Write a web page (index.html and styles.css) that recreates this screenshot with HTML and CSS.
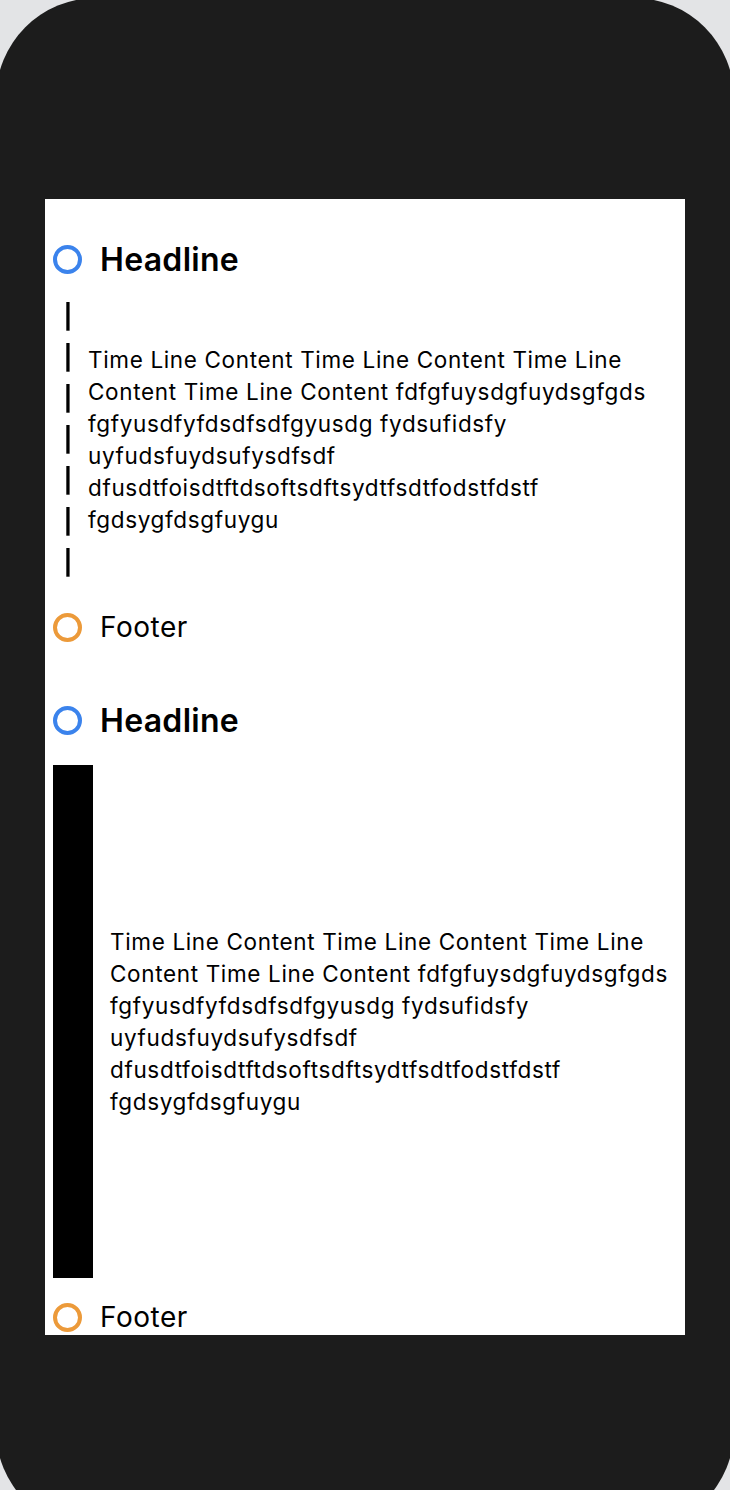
FILE: index.html
```html
<!DOCTYPE html>
<html>
<head>
<meta charset="utf-8">
<link rel="stylesheet" href="styles.css">
</head>
<body>
<div class="phone">
  <div class="screen">
    <section class="item item-first">
      <div class="row head">
        <span class="dot dot-blue"></span>
        <span class="title">Headline</span>
      </div>
      <div class="body body-pipes">
        <div class="pipes">
          <span>|</span><span>|</span><span>|</span><span>|</span><span>|</span><span>|</span><span>|</span>
        </div>
        <p class="content content-pipes">Time Line Content Time Line Content Time Line Content Time Line Content fdfgfuysdgfuydsgfgds fgfyusdfyfdsdfsdfgyusdg fydsufidsfy uyfudsfuydsufysdfsdf dfusdtfoisdtftdsoftsdftsydtfsdtfodstfdstf fgdsygfdsgfuygu</p>
      </div>
      <div class="row foot">
        <span class="dot dot-orange"></span>
        <span class="footer-text">Footer</span>
      </div>
    </section>
    <section class="item item-second">
      <div class="row head">
        <span class="dot dot-blue"></span>
        <span class="title">Headline</span>
      </div>
      <div class="body body-bar">
        <div class="bar"></div>
        <p class="content content-bar">Time Line Content Time Line Content Time Line Content Time Line Content fdfgfuysdgfuydsgfgds fgfyusdfyfdsdfsdfgyusdg fydsufidsfy uyfudsfuydsufysdfsdf dfusdtfoisdtftdsoftsdftsydtfsdtfodstfdstf fgdsygfdsgfuygu</p>
      </div>
      <div class="row foot foot-last">
        <span class="dot dot-orange"></span>
        <span class="footer-text">Footer</span>
      </div>
    </section>
  </div>
</div>
</body>
</html>
```

FILE: styles.css
```css
html, body {
  margin: 0;
  padding: 0;
}
body {
  background: #e3e4e6;
  width: 730px;
  height: 1490px;
  overflow: hidden;
  font-family: Inter, "Noto Sans", "Liberation Sans", sans-serif;
  color: #000;
}
.phone {
  margin: -2px -4px 0 -4px;
  width: 738px;
  height: 1532px;
  border-radius: 100px;
  background: #1c1c1c;
  padding: 201px 0 0 49px;
  box-sizing: border-box;
}
.screen {
  width: 640px;
  height: 1136px;
  background: #fff;
  overflow: hidden;
  display: flex;
  flex-direction: column;
}
.item {
  display: flex;
  flex-direction: column;
}
.item-first {
  padding-top: 40px;
}
.item-second {
  margin-top: 53px;
}
.row {
  display: flex;
  align-items: center;
  height: 40px;
}
.dot {
  width: 29px;
  height: 29px;
  box-sizing: border-box;
  border-radius: 50%;
  border: 4px solid #3b83ec;
  margin-left: 8px;
  flex: none;
}
.dot-blue {
  border-color: #3b83ec;
}
.dot-orange {
  border-color: #ec9a3a;
}
.title {
  margin-left: 18px;
  font-size: 32px;
  font-weight: 600;
  letter-spacing: 0.3px;
}
.footer-text {
  margin-left: 18px;
  font-size: 28px;
  font-weight: 400;
  letter-spacing: 0.5px;
}
.body {
  display: flex;
  align-items: center;
}
.body-pipes {
  margin-top: 17px;
}
.pipes {
  width: 30px;
  margin-left: 8px;
  display: flex;
  flex-direction: column;
  align-items: center;
  flex: none;
  background: #fff;
  will-change: transform;
}
.pipes span {
  font-size: 24px;
  line-height: 41px;
  height: 41px;
  font-weight: 700;
  color: #000;
}
.content {
  margin: 0;
  font-size: 22.5px;
  line-height: 32px;
  font-weight: 400;
  letter-spacing: 0.65px;
}
.content-pipes {
  margin-left: 5px;
}
.foot {
  margin-top: 24px;
}
.body-bar {
  margin-top: 25px;
}
.bar {
  width: 40px;
  height: 513px;
  background: #000;
  margin-left: 8px;
  flex: none;
}
.content-bar {
  margin-left: 17px;
}
.foot-last {
  margin-top: 19px;
}
```
